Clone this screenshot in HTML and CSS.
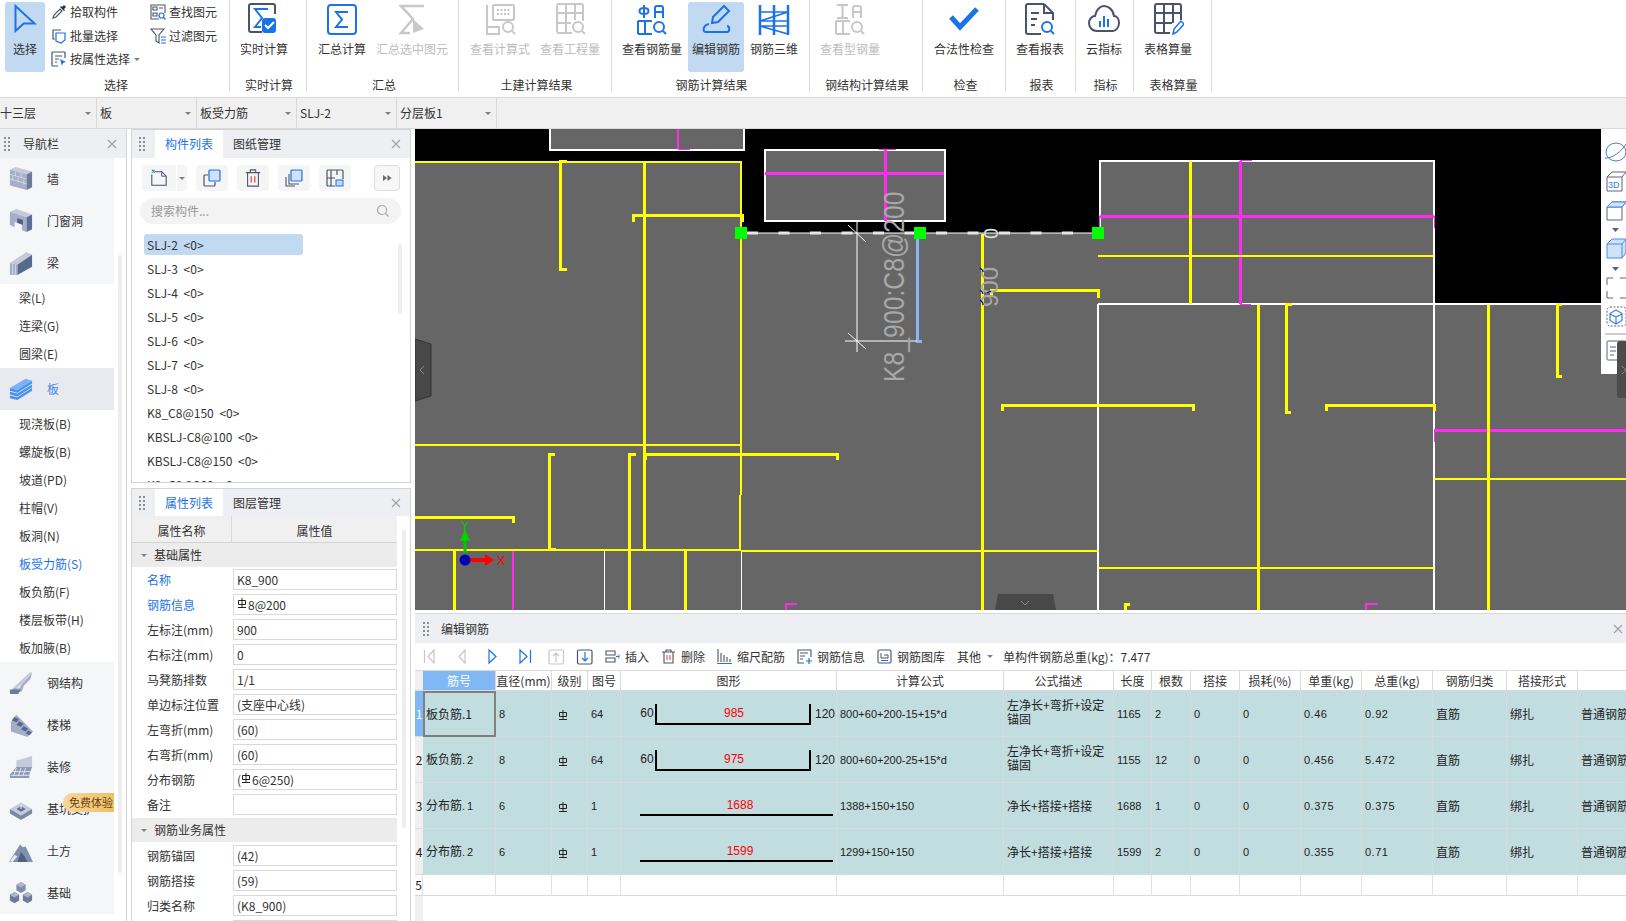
FILE: index.html
```html
<!DOCTYPE html>
<html lang="zh-CN">
<head>
<meta charset="utf-8">
<title>编辑钢筋</title>
<link rel="stylesheet" href="styles.css">
</head>
<body>
<svg class="defs" width="0" height="0">
  <symbol id="grip" viewBox="0 0 6 14"><path d="M0 0h2v2H0zM4 0h2v2H4zM0 4h2v2H0zM4 4h2v2H4zM0 8h2v2H0zM4 8h2v2H4zM0 12h2v2H0zM4 12h2v2H4z" fill="#8c8c8c"/></symbol>
  <symbol id="close" viewBox="0 0 10 10"><path d="M1 1l8 8M9 1l-8 8" stroke="#a3a3a3" stroke-width="1.2" fill="none"/></symbol>
  <symbol id="bar" viewBox="0 0 10 10"><path d="M1.5 2.5h7v4h-7zM5 0v9M1 9.5h8" stroke="#222" stroke-width="1" fill="none"/></symbol>
</svg>

<header class="ribbon">
  <section class="group g-select">
    <div class="body">
      <div class="big active sel"><svg class="ic" viewBox="0 0 32 32"><path d="M6.5 3V28L14.7 20.5H25.5Z" fill="none" stroke="#1a73e8" stroke-width="2"/></svg><span>选择</span></div>
      <div class="smalls">
        <div class="sm"><svg class="sic" viewBox="0 0 16 16"><path d="M2 14l1-3 6-6 2 2-6 6z" fill="none" stroke="#4a5468" stroke-width="1.2"/><path d="M9 3l1-1 1 1 2-2 2 2-2 2 1 1-1 1-4-4z" fill="#2b3242"/></svg><span>拾取构件</span></div>
        <div class="sm"><svg class="sic" viewBox="0 0 16 16"><path d="M10 2H2v9h2" fill="none" stroke="#4a5468" stroke-width="1.2"/><path d="M5 5h9v7l-4 3-5-2z" fill="none" stroke="#1a73e8" stroke-width="1.2"/></svg><span>批量选择</span></div>
        <div class="sm"><svg class="sic" viewBox="0 0 16 16"><path d="M14 7V2a1 1 0 0 0-1-1H2a1 1 0 0 0-1 1v12a1 1 0 0 0 1 1h5M4 5h7M4 8h4M4 11h2" fill="none" stroke="#4a5468" stroke-width="1.2"/><path d="M9 8l6 3-3 1-1 3z" fill="#1a73e8"/></svg><span>按属性选择</span><i class="caret"></i></div>
      </div>
      <div class="smalls col2">
        <div class="sm"><svg class="sic" viewBox="0 0 16 16"><path d="M15 9V1H1v14h8M3 3h4v3H3zM9 4h4M3 9h4v3H3z" fill="none" stroke="#4a5468" stroke-width="1.1"/><circle cx="11.5" cy="11.5" r="2.5" fill="none" stroke="#1a73e8" stroke-width="1.2"/><path d="M13.5 13.5L15.5 15.5" stroke="#1a73e8" stroke-width="1.2"/></svg><span>查找图元</span></div>
        <div class="sm"><svg class="sic" viewBox="0 0 16 16"><path d="M1 1h13L9 7v8L6 13V7z" fill="none" stroke="#4a5468" stroke-width="1.1"/><path d="M11 9h5M11 12h5M11 15h5" stroke="#1a73e8" stroke-width="1.2"/></svg><span>过滤图元</span></div>
      </div>
    </div>
    <div class="glabel">选择</div>
  </section>

  <section class="group g-real">
    <div class="body">
      <div class="big"><svg class="ic" viewBox="0 0 32 32"><path d="M12 1H3a2 2 0 0 0-2 2v24a2 2 0 0 0 2 2h11M12 1h13a2 2 0 0 1 2 2v8" fill="none" stroke="#4a5468" stroke-width="2"/><path d="M20 6H7l7 9-7 9h6" fill="none" stroke="#1a73e8" stroke-width="2"/><rect x="14" y="15" width="14" height="15" rx="3" fill="#1a73e8"/><path d="M17 22l3 3 6-6" fill="none" stroke="#fff" stroke-width="2"/></svg><span>实时计算</span></div>
    </div>
    <div class="glabel">实时计算</div>
  </section>

  <section class="group g-sum">
    <div class="body">
      <div class="big"><svg class="ic" viewBox="0 0 32 32"><rect x="2" y="2" width="28" height="29" rx="3" fill="none" stroke="#1a73e8" stroke-width="2"/><path d="M22 9H10l6 7.5-6 7.5h12" fill="none" stroke="#1a73e8" stroke-width="2"/></svg><span>汇总计算</span></div>
      <div class="big off tight"><svg class="ic" viewBox="0 0 32 32"><path d="M28 3H5l12 13L5 30h9" fill="none" stroke="#c8c8c8" stroke-width="2.5"/><path d="M17 16l11 10-11 4z" fill="#c8c8c8"/></svg><span>汇总选中图元</span></div>
    </div>
    <div class="glabel">汇总</div>
  </section>

  <section class="group g-civil">
    <div class="body">
      <div class="big off"><svg class="ic" viewBox="0 0 32 32"><g fill="none" stroke="#c8c8c8" stroke-width="2"><path d="M3 2V31H15V24H3"/><rect x="9" y="2" width="21" height="15" rx="1"/><path d="M13 7h13M13 11h13" stroke-dasharray="2 1.5"/><circle cx="24" cy="24" r="5"/><path d="M28 28l3 3"/></g></svg><span>查看计算式</span></div>
      <div class="big off tight"><svg class="ic" viewBox="0 0 32 32"><g fill="none" stroke="#c8c8c8" stroke-width="2"><path d="M18 30H5a2 2 0 0 1-2-2V3a2 2 0 0 1 2-2h22a2 2 0 0 1 2 2v15M3 10h26M3 20h14M12 1v29M21 1v16"/><circle cx="24" cy="24" r="5"/><path d="M28 28l3 3"/></g></svg><span>查看工程量</span></div>
    </div>
    <div class="glabel">土建计算结果</div>
  </section>

  <section class="group g-rebar">
    <div class="body">
      <div class="big"><svg class="ic" viewBox="0 0 32 32"><g fill="none" stroke="#1a73e8" stroke-width="2"><path d="M8 2V15M8 5c6 0 6 6 0 6S2 5 8 5z"/><path d="M19 15V5a2 2 0 0 1 2-2h4a2 2 0 0 1 2 2v10M19 9h8"/><path d="M2 18H16M9 18V31M2 31H16M2 18V31"/><circle cx="23" cy="24" r="5"/><path d="M27 28l3 3"/></g></svg><span>查看钢筋量</span></div>
      <div class="big active edit"><svg class="ic" viewBox="0 0 32 32"><g fill="none" stroke="#1a73e8" stroke-width="2"><path d="M12 20l1-6L24 3l5 5L18 19z"/><path d="M9 21C3 22 2 29 6 29H27c3 0 3-6 0-6"/></g></svg><span>编辑钢筋</span></div>
      <div class="big"><svg class="ic" viewBox="0 0 32 32"><g fill="none" stroke="#1a73e8"><path d="M2 2V32M30 2V32M16 2V32" stroke-width="2.5"/><path d="M2 9H30M2 18H30M2 23H30M2 18L30 9M2 23L30 31" stroke-width="1.6"/></g></svg><span>钢筋三维</span></div>
    </div>
    <div class="glabel">钢筋计算结果</div>
  </section>

  <section class="group g-steel">
    <div class="body">
      <div class="big off"><svg class="ic" viewBox="0 0 32 32"><g fill="none" stroke="#c8c8c8" stroke-width="2"><path d="M3 2H14M8.5 2V15M3 15H14"/><path d="M19 15V5a2 2 0 0 1 2-2h4a2 2 0 0 1 2 2v10M19 9h8"/><path d="M2 18H16M9 18V31M2 31H16M2 18V31"/><circle cx="23" cy="24" r="5"/><path d="M27 28l3 3"/></g></svg><span>查看型钢量</span></div>
    </div>
    <div class="glabel">钢结构计算结果</div>
  </section>

  <section class="group g-check">
    <div class="body">
      <div class="big"><svg class="ic" viewBox="0 0 32 32"><path d="M3 14l9 10L29 6" fill="none" stroke="#1a73e8" stroke-width="5"/></svg><span>合法性检查</span></div>
    </div>
    <div class="glabel">检查</div>
  </section>

  <section class="group g-report">
    <div class="body">
      <div class="big"><svg class="ic" viewBox="0 0 32 32"><g fill="none" stroke="#4a5468" stroke-width="2"><path d="M20 1H4a2 2 0 0 0-2 2v26a2 2 0 0 0 2 2h13M20 1l9 9v7M20 1v9h9M7 10h8M7 16h6M7 22h4"/></g><circle cx="23" cy="24" r="5" fill="none" stroke="#1a73e8" stroke-width="2"/><path d="M27 28l3 3" stroke="#1a73e8" stroke-width="2"/></svg><span>查看报表</span></div>
    </div>
    <div class="glabel">报表</div>
  </section>

  <section class="group g-index">
    <div class="body">
      <div class="big"><svg class="ic" viewBox="0 0 32 32"><path d="M9 28C3 28 1 23 1 20c0-4 3-7 6-7C8 7 12 3 16 3s9 3 10 10c3 0 5 3 5 7s-3 8-6 8z" fill="none" stroke="#4a5468" stroke-width="2"/><path d="M12 18v6M16 13v11M20 16v8" stroke="#1a73e8" stroke-width="2"/></svg><span>云指标</span></div>
    </div>
    <div class="glabel">指标</div>
  </section>

  <section class="group g-table">
    <div class="body">
      <div class="big"><svg class="ic" viewBox="0 0 32 32"><path d="M18 30H5a2 2 0 0 1-2-2V3a2 2 0 0 1 2-2h22a2 2 0 0 1 2 2v14M3 10h26M3 20h17M12 1v29M21 1v19" fill="none" stroke="#4a5468" stroke-width="2"/><path d="M21 31l1-5 7-8 3 3-7 8z" fill="#fff" stroke="#1a73e8" stroke-width="1.5"/></svg><span>表格算量</span></div>
    </div>
    <div class="glabel">表格算量</div>
  </section>
</header>

<div class="selbar">
  <div class="cell first"><span>十三层</span><i class="caret"></i></div>
  <div class="cell"><span>板</span><i class="caret"></i></div>
  <div class="cell"><span>板受力筋</span><i class="caret"></i></div>
  <div class="cell"><span>SLJ-2</span><i class="caret"></i></div>
  <div class="cell"><span>分层板1</span><i class="caret"></i></div>
</div>

<main class="main">
  <nav class="nav">
    <div class="phead">
      <svg class="grip"><use href="#grip"/></svg>
      <span class="ptitle navtitle">导航栏</span>
      <svg class="x"><use href="#close"/></svg>
    </div>
    <div class="navbody">
      <div class="navlist">
        <div class="nbig"><svg class="nic" viewBox="0 0 26 26"><path d="M1 3l6-3 18 5-6 3z" fill="#c4cadb"/><path d="M1 3l18 5v17L1 20z" fill="#a6aec6"/><path d="M19 8l6-3v17l-6 3z" fill="#6d7a9c"/><path d="M1 8l18 5M1 13l18 5M7 5v5M13 7v5M4 10v5M10 12v5M16 14v5" stroke="#d3d8e6" fill="none"/></svg><span>墙</span></div>
        <div class="nbig"><svg class="nic" viewBox="0 0 26 26"><path d="M1 3l7-3 17 6-6 3z" fill="#c4cadb"/><path d="M1 3l18 6v16l-5-2v-6l-8-3v6L1 17z" fill="#a6aec6"/><path d="M19 9l6-3v16l-6 3z" fill="#5f6e92"/><path d="M9 10l6 2v5l-6-2z" fill="#4e5d80"/></svg><span>门窗洞</span></div>
        <div class="nbig"><svg class="nic" viewBox="0 0 26 26"><path d="M1 13L19 1l6 3L9 15z" fill="#c4cadb"/><path d="M9 15L25 4v13L9 26z" fill="#58688f"/><path d="M1 13l8 2v11H1z" fill="#a6aec6"/><path d="M4 14v12M7 15v11" stroke="#d3d8e6"/></svg><span>梁</span></div>
        <div class="nsub">梁(L)</div>
        <div class="nsub">连梁(G)</div>
        <div class="nsub">圆梁(E)</div>
        <div class="nbig cur"><svg class="nic" viewBox="0 0 26 26"><path d="M1 12L18 2l7 2L9 14z" fill="#79b2f7"/><path d="M1 12l8 2v3l-8-2zM9 14L25 4v3L9 17zM1 16l8 2v3l-8-2zM9 18l16-10v3L9 21zM1 20l8 2v3l-8-2zM9 22l16-10v3L9 25z" fill="#4a90ee"/></svg><span>板</span></div>
        <div class="nsub">现浇板(B)</div>
        <div class="nsub">螺旋板(B)</div>
        <div class="nsub">坡道(PD)</div>
        <div class="nsub">柱帽(V)</div>
        <div class="nsub">板洞(N)</div>
        <div class="nsub on">板受力筋(S)</div>
        <div class="nsub">板负筋(F)</div>
        <div class="nsub">楼层板带(H)</div>
        <div class="nsub">板加腋(B)</div>
        <div class="nbig"><svg class="nic" viewBox="0 0 26 26"><path d="M1 24l4-6 6 1 3-5 11-12-2 7-7 7-2 6z" fill="#a6aec6"/><path d="M5 18L23 1l2 1L9 19z" fill="#c4cadb"/><path d="M1 20h12l-3 5H1z" fill="#6d7a9c"/></svg><span>钢结构</span></div>
        <div class="nbig"><svg class="nic" viewBox="0 0 26 26"><path d="M2 10l6-8 18 18-6 6L2 20z" fill="#a6aec6"/><path d="M6 4l5 3-3 3-5-2zM11 9l5 3-3 3-5-2zM16 14l5 3-3 3-5-2zM21 19l4 2-3 3-4-2z" fill="#58688f"/></svg><span>楼梯</span></div>
        <div class="nbig"><svg class="nic" viewBox="0 0 26 26"><path d="M8 6L25 1v12L8 17z" fill="#c4cadb"/><path d="M1 21l7-8h17l-3 8v4H1z" fill="#8d98b6"/><path d="M4 18h19M2 22h20M8 14l-3 9M13 14l-3 9M18 14l-3 9" stroke="#e6e9f1" fill="none"/></svg><span>装修</span></div>
        <div class="nbig"><svg class="nic" viewBox="0 0 26 26"><path d="M1 13L13 6l12 7-12 7z" fill="#c4cadb"/><path d="M1 13l12 7v5L1 18zM25 13l-12 7v5l12-7z" fill="#7b88a8"/><path d="M8 13l5-3 5 3-5 3z" fill="#5f6e92"/><path d="M13 8v5" stroke="#fff"/></svg><span>基坑支护</span></div>
        <div class="nbig"><svg class="nic" viewBox="0 0 26 26"><path d="M0 25L12 6l3 3 3-1 8 17z" fill="#8290b0"/><path d="M9 25l4-11 4 5 3 6z" fill="#4f5f85"/><path d="M1 24l5-7 3 2-5 6z" fill="#e7eaf1"/></svg><span>土方</span></div>
        <div class="nbig"><svg class="nic" viewBox="0 0 26 26"><path d="M8 4l5-3 5 3v6l-5 3-5-3z" fill="#7e8bab"/><path d="M8 4l5 3 5-3-5-3z" fill="#aeb6cc"/><path d="M1 15l5-3 5 3v6l-5 3-5-3z" fill="#6d7a9c"/><path d="M1 15l5 3 5-3-5-3z" fill="#aeb6cc"/><path d="M15 15l5-3 5 3v6l-5 3-5-3z" fill="#6d7a9c"/><path d="M15 15l5 3 5-3-5-3z" fill="#aeb6cc"/></svg><span>基础</span></div>
        <div class="badge">免费体验</div>
      </div>
      <div class="navtrack"><div class="navthumb"></div></div>
    </div>
  </nav>

  <div class="mid">
    <section class="panel listpanel">
      <div class="phead">
        <svg class="grip"><use href="#grip"/></svg>
        <span class="tab on">构件列表</span><span class="tab">图纸管理</span>
        <svg class="x"><use href="#close"/></svg>
      </div>
      <div class="listtools">
        <div class="tbtn newbtn">
          <svg class="t20" viewBox="0 0 18 20"><path d="M4 3h8l5 5v10H1V6" fill="none" stroke="#4a5468" stroke-width="1.2"/><path d="M12 3v5h5" fill="none" stroke="#4a5468"/><path d="M1 1l3 3M4 1L1 4" stroke="#1a73e8" stroke-width="1.2"/></svg>
          <span class="split"><i class="caret"></i></span>
        </div>
        <div class="tbtn"><svg class="t20" viewBox="0 0 18 18"><path d="M5 6H2a1 1 0 0 0-1 1v9a1 1 0 0 0 1 1h9a1 1 0 0 0 1-1v-3" fill="none" stroke="#4a5468" stroke-width="1.2"/><rect x="6" y="1" width="11" height="11" rx="1" fill="#cfe2fa" stroke="#1a73e8" stroke-width="1.2"/></svg></div>
        <div class="tbtn"><svg class="t20" viewBox="0 0 18 20"><path d="M1 4h16M6 4V1h6v3M3 4v15h12V4" fill="none" stroke="#4a5468" stroke-width="1.2"/><path d="M7 8v7M11 8v7" stroke="#e23b3b" stroke-width="1.3"/></svg></div>
        <div class="tbtn"><svg class="t20" viewBox="0 0 18 18"><rect x="6" y="1" width="11" height="11" rx="1" fill="#cfe2fa" stroke="#1a73e8" stroke-width="1.2"/><path d="M4 5v10h10M1 8v9h9" fill="none" stroke="#4a5468" stroke-width="1.1"/></svg></div>
        <div class="tbtn"><svg class="t20" viewBox="0 0 18 18"><path d="M9 17H2a1 1 0 0 1-1-1V2a1 1 0 0 1 1-1h14a1 1 0 0 1 1 1v8M1 9h8M5 1v8M5 9v8M11 1v5" fill="none" stroke="#4a5468" stroke-width="1.2"/><rect x="10" y="11" width="7" height="6" fill="#bcd7f8" stroke="#1a73e8"/></svg></div>
        <div class="tbtn more"><svg class="t10" viewBox="0 0 10 10"><path d="M1 2l4 3-4 3zM5.5 2l4 3-4 3z" fill="#666"/></svg></div>
      </div>
      <div class="search"><span>搜索构件...</span><svg class="t14" viewBox="0 0 14 14"><circle cx="6" cy="6" r="4.5" fill="none" stroke="#a8a8a8" stroke-width="1.2"/><path d="M9.5 9.5l3 3" stroke="#a8a8a8" stroke-width="1.2"/></svg></div>
      <div class="clist">
        <div class="li sel"><span>SLJ-2 &lt;0&gt;</span></div>
        <div class="li"><span>SLJ-3 &lt;0&gt;</span></div>
        <div class="li"><span>SLJ-4 &lt;0&gt;</span></div>
        <div class="li"><span>SLJ-5 &lt;0&gt;</span></div>
        <div class="li"><span>SLJ-6 &lt;0&gt;</span></div>
        <div class="li"><span>SLJ-7 &lt;0&gt;</span></div>
        <div class="li"><span>SLJ-8 &lt;0&gt;</span></div>
        <div class="li"><span>K8_C8@150 &lt;0&gt;</span></div>
        <div class="li"><span>KBSLJ-C8@100 &lt;0&gt;</span></div>
        <div class="li"><span>KBSLJ-C8@150 &lt;0&gt;</span></div>
        <div class="li"><span>K8_C8@200 &lt;0&gt;</span></div>
        <div class="listthumb"></div>
      </div>
    </section>

    <section class="panel proppanel">
      <div class="phead">
        <svg class="grip"><use href="#grip"/></svg>
        <span class="tab on">属性列表</span><span class="tab">图层管理</span>
        <svg class="x"><use href="#close"/></svg>
      </div>
      <div class="propwrap">
        <div class="props">
          <div class="phdr"><span class="pk">属性名称</span><span class="pv">属性值</span></div>
          <div class="pgroup"><i class="caret"></i>基础属性</div>
          <div class="prow"><span class="lab blue">名称</span><span class="val">K8_900</span></div>
          <div class="prow"><span class="lab blue">钢筋信息</span><span class="val"><svg class="barsym up"><use href="#bar"/></svg>8@200</span></div>
          <div class="prow"><span class="lab">左标注(mm)</span><span class="val">900</span></div>
          <div class="prow"><span class="lab">右标注(mm)</span><span class="val">0</span></div>
          <div class="prow"><span class="lab">马凳筋排数</span><span class="val">1/1</span></div>
          <div class="prow"><span class="lab">单边标注位置</span><span class="val">(支座中心线)</span></div>
          <div class="prow"><span class="lab">左弯折(mm)</span><span class="val">(60)</span></div>
          <div class="prow"><span class="lab">右弯折(mm)</span><span class="val">(60)</span></div>
          <div class="prow"><span class="lab">分布钢筋</span><span class="val">(<svg class="barsym up"><use href="#bar"/></svg>6@250)</span></div>
          <div class="prow"><span class="lab">备注</span><span class="val"></span></div>
          <div class="pgroup second"><i class="caret"></i>钢筋业务属性</div>
          <div class="prow"><span class="lab">钢筋锚固</span><span class="val">(42)</span></div>
          <div class="prow"><span class="lab">钢筋搭接</span><span class="val">(59)</span></div>
          <div class="prow"><span class="lab">归类名称</span><span class="val">(K8_900)</span></div>
          <div class="prow"><span class="lab"></span><span class="val"></span></div>
        </div>
        <div class="propthumb"></div>
      </div>
    </section>
  </div>

  <div class="work">
    <div class="canvas">
      <svg class="draw" viewBox="415 129 1211 481" width="1211" height="481">
        <g fill="#666" stroke="none">
          <path d="M415 162H741V233H1100V161H1434V304H1626V610H415Z"/>
          <rect x="550" y="129" width="194" height="21"/>
          <rect x="765" y="150" width="180" height="71"/>
        </g>
        <g fill="none" stroke="#fff" stroke-width="1.5" shape-rendering="crispEdges">
          <path d="M550 129V150H744V129"/>
          <rect x="765" y="150" width="180" height="71"/>
          <path d="M1100 233V161H1434V610M1098 304H1620"/>
          <path d="M1098 304V610" stroke-width="2"/>
          <path d="M741 550V610M604 550V610" stroke-width="1"/>
        </g>
        <g fill="none" stroke="#ff2bf0" stroke-width="3" shape-rendering="crispEdges">
          <path d="M678 129V149" stroke-width="2"/>
          <path d="M678 149H690" stroke-width="1"/>
          <path d="M765 173H944"/>
          <path d="M885 150V221"/>
          <path d="M879 149H896M1099 216V233M1434 216V228" stroke-width="1"/>
          <path d="M1100 216H1434"/>
          <path d="M1252 160H1240" stroke-width="1"/>
          <path d="M1240 161V304"/>
          <path d="M1240 304H1251" stroke-width="1"/>
          <path d="M1434 430H1626"/>
          <path d="M1434 430V442" stroke-width="1"/>
          <path d="M524 550H513" stroke-width="1"/>
          <path d="M513 550V610" stroke-width="2"/>
          <path d="M797 604H786V610M1378 604H1366V610" stroke-width="2.5"/>
        </g>
        <g fill="none" stroke="#ff0" stroke-width="3" shape-rendering="crispEdges">
          <path d="M415 162H741V495" stroke-width="2"/>
          <path d="M567 161H560V269H567"/>
          <path d="M644 162V549"/>
          <path d="M633 222V215H742V222"/>
          <path d="M645 460V454H837V460"/>
          <path d="M555 454H549V549H556"/>
          <path d="M636 454H629V610"/>
          <path d="M740 495V550H415" stroke-width="2"/>
          <path d="M415 517H513V523"/>
          <path d="M454 550V610M685 550V610"/>
          <path d="M982 234V610"/>
          <path d="M991 297V290H1098V298"/>
          <path d="M1002 411V405H1193V411"/>
          <path d="M1190 161V304"/>
          <path d="M1258 305V610"/>
          <path d="M1292 304H1286V412H1291"/>
          <path d="M1326 411V405H1434V411"/>
          <path d="M1488 305V610"/>
          <path d="M1562 304H1557V376H1562"/>
          <path d="M1130 604H1125V610"/>
          <path d="M415 445H741M741 551H1098M1098 256H1434M1098 568H1434M1434 479H1626" stroke-width="2.5"/>
        </g>
        <path d="M917 234V341H922" fill="none" stroke="#8ab4f8" stroke-width="3" shape-rendering="crispEdges"/>
        <g fill="none" stroke="#fff">
          <path d="M857 221V352M845 341H917M741 233H1098"/>
          <path d="M848 225L866 242M848 333L866 349"/>
          <path d="M747 233H1098" stroke="#e6e6e6" stroke-width="3" stroke-dasharray="11 20.5"/>
        </g>
        <g fill="#0f0">
          <rect x="735" y="227" width="12" height="12"/>
          <rect x="914" y="227" width="12" height="12"/>
          <rect x="1092" y="227" width="12" height="12"/>
        </g>
        <text class="dim big-dim" transform="translate(904 382) rotate(-90) scale(1 1.17)">K8_900:C8@200</text>
        <text class="dim small-dim" transform="translate(998 307) rotate(-90)">900</text>
        <text class="dim zero" transform="translate(998 239) rotate(-90)">0</text>
        <path d="M980 268q3 2 3 4M980 290q3 2 3 4M980 300q3 2 3 5M991 291l-4 2" fill="none" stroke="#0000d0" stroke-width="1.2"/>
        <path d="M465 553V537" stroke="#00c800" stroke-width="3"/>
        <path d="M465 529l5 12h-10z" fill="#00d000"/>
        <path d="M470 560H486" stroke="#f00" stroke-width="4"/>
        <path d="M494 560l-9-6v12z" fill="#f00"/>
        <circle cx="465" cy="560" r="5.5" fill="#0000b0"/>
        <text class="axis axy" x="465" y="530" text-anchor="middle">Y</text>
        <text class="axis axx" x="501" y="565" text-anchor="middle">X</text>
        <path d="M415 339l16 5V396l-16 5Z" fill="#484848" stroke="#333"/>
        <path d="M424 366l-4 4 4 4" fill="none" stroke="#888"/>
        <path d="M998 594H1053L1056 610H995Z" fill="#484848"/>
        <path d="M1021 601l4 4 4-4" fill="none" stroke="#888"/>
      </svg>
      <svg class="toolbox" viewBox="0 0 26 269" width="26" height="269">
        <path d="M26 0H1V245H26Z" fill="#fff"/>
        <g fill="none" stroke="#5a6478" stroke-width="1">
          <ellipse cx="16" cy="23" rx="10" ry="9" stroke="#4a7ec0"/>
          <path d="M5 29C12 30 22 22 26 15" stroke="#4a7ec0"/>
          <path d="M7 48l5-5h14M7 48h15v14H7zM22 48l4-5"/>
          <path d="M7 78l5-5h14M7 78h15v13H7zM22 78l4-5"/>
          <path d="M7 78l5-5h14l-4 5z" fill="#cfe2fa" stroke="#4a8be8"/>
          <path d="M7 115l5-5h14v14l-4 5H7z" fill="#cfe2fa" stroke="#4a8be8"/>
          <path d="M7 115h15v14M22 115l4-5" stroke="#4a8be8"/>
          <path d="M7 156v-7h6M26 149h-6M7 162v7h6M26 169h-6"/>
          <rect x="7" y="178" width="19" height="19" rx="3" stroke-dasharray="2 1.5"/>
          <path d="M16 181l6 3.5v7L16 195l-6-3.5v-7zM10 185l6 3 6-3M16 188v7" stroke="#3b82e8" stroke-width="1.2"/>
          <path d="M5 205H26" stroke="#999"/>
          <rect x="7" y="212" width="19" height="19" rx="1"/>
          <path d="M10 218h6M10 222h6M10 226h4"/>
        </g>
        <text class="td" x="8" y="59">3D</text>
        <g fill="#5a6478"><path d="M12 99h7l-3.5 4zM12 138h7l-3.5 4z"/></g>
        <path d="M26 212H20a3 3 0 0 0-3 3V266a3 3 0 0 0 3 3H26Z" fill="#4c4c4c"/>
        <path d="M22 237l4 4-4 4" fill="none" stroke="#888"/>
      </svg>
    </div>

    <section class="rebar">
      <div class="phead">
        <svg class="grip"><use href="#grip"/></svg>
        <span class="ptitle">编辑钢筋</span>
        <svg class="x"><use href="#close"/></svg>
      </div>
      <div class="rtools">
        <svg class="rnav" viewBox="416 643 179 27" width="179" height="27">
          <g fill="none" stroke-width="1.2">
            <path d="M424.5 650V663M434 650l-6 6.5 6 6.5z" stroke="#c6c6c6"/>
            <path d="M465 650l-6 6.5 6 6.5z" stroke="#c6c6c6"/>
            <path d="M489 650l7 6.5-7 6.5z" stroke="#1a73e8"/>
            <path d="M520 650l7 6.5-7 6.5zM530.5 650V663" stroke="#1a73e8"/>
            <rect x="549" y="650" width="14.5" height="14" rx="1.5" stroke="#c6c6c6"/>
            <path d="M556 662v-9M553 656l3-3 3 3" stroke="#c6c6c6"/>
            <rect x="577.5" y="650" width="14.5" height="14" rx="1.5" stroke="#4a5468"/>
            <path d="M585 652v9M582 658l3 3 3-3" stroke="#1a73e8"/>
          </g>
        </svg>
        <div class="ritem"><svg class="t15" viewBox="0 0 15 15"><path d="M1 2h9v4H1zM1 9h9v4H1z" fill="none" stroke="#4a5468" stroke-width="1.1"/><path d="M11 7.5h3M13 5.5l2 2-2 2" fill="none" stroke="#1a73e8"/></svg><span>插入</span></div>
        <div class="ritem"><svg class="t15" viewBox="0 0 15 15"><path d="M1 3h13M5 3V1h5v2M3 3v11h9V3" fill="none" stroke="#4a5468" stroke-width="1.1"/><path d="M6 6v5M9 6v5" stroke="#e23b3b"/></svg><span>删除</span></div>
        <div class="ritem"><svg class="t15" viewBox="0 0 15 15"><path d="M1 0v13M4 4v9M7 6v7M10 8v5M13 10v3" fill="none" stroke="#4a5468" stroke-width="1.1"/><path d="M0 14.5h15" stroke="#1a73e8"/></svg><span>缩尺配筋</span></div>
        <div class="ritem"><svg class="t15" viewBox="0 0 15 15"><path d="M14 8V1H1v13h6M3 4h8M3 7h5M3 10h3" fill="none" stroke="#4a5468" stroke-width="1.1"/><path d="M9 12h6M12 9v6" stroke="#1a73e8" stroke-width="1.2"/></svg><span>钢筋信息</span></div>
        <div class="ritem"><svg class="t15" viewBox="0 0 15 15"><rect x="1" y="1" width="13" height="13" rx="1.5" fill="none" stroke="#4a5468" stroke-width="1.1"/><path d="M4 4v5h7V6H7" fill="none" stroke="#4a5468"/><path d="M4 11.5h7" stroke="#1a73e8"/></svg><span>钢筋图库</span></div>
        <div class="ritem text"><span>其他</span><i class="caret"></i></div>
        <div class="rtotal">单构件钢筋总重(kg)：7.477</div>
      </div>
      <div class="tablewrap">
        <table class="grid">
          <colgroup>
            <col class="c0"><col class="c1"><col class="c2"><col class="c3"><col class="c4"><col class="c5"><col class="c6"><col class="c7"><col class="c8"><col class="c9"><col class="c10"><col class="c11"><col class="c12"><col class="c13"><col class="c14"><col class="c15"><col class="c16">
          </colgroup>
          <thead>
            <tr><th class="gut"></th><th class="hsel">筋号</th><th>直径(mm)</th><th>级别</th><th>图号</th><th>图形</th><th>计算公式</th><th>公式描述</th><th>长度</th><th>根数</th><th>搭接</th><th>损耗(%)</th><th>单重(kg)</th><th>总重(kg)</th><th>钢筋归类</th><th>搭接形式</th><th></th></tr>
          </thead>
          <tbody>
            <tr>
              <td class="gut gsel">1</td><td class="csel">板负筋.1</td><td class="num">8</td><td class="sym"><svg class="barsym"><use href="#bar"/></svg></td><td class="num">64</td>
              <td class="shape"><svg viewBox="0 0 215 45" width="215" height="45"><text class="sn" x="26" y="26" text-anchor="middle">60</text><path d="M35 13V33H189V13" fill="none" stroke="#000" stroke-width="2"/><text class="sr" x="113" y="26" text-anchor="middle">985</text><text class="sn" x="204" y="27" text-anchor="middle">120</text></svg></td>
              <td class="num">800+60+200-15+15*d</td><td class="desc">左净长+弯折+设定锚固</td><td class="num">1165</td><td class="num">2</td><td class="num">0</td><td class="num">0</td><td class="num dec">0.46</td><td class="num dec">0.92</td><td>直筋</td><td>绑扎</td><td>普通钢筋</td>
            </tr>
            <tr>
              <td class="gut">2</td><td>板负筋<span class="num sfx">.2</span></td><td class="num">8</td><td class="sym"><svg class="barsym"><use href="#bar"/></svg></td><td class="num">64</td>
              <td class="shape"><svg viewBox="0 0 215 45" width="215" height="45"><text class="sn" x="26" y="26" text-anchor="middle">60</text><path d="M35 13V33H189V13" fill="none" stroke="#000" stroke-width="2"/><text class="sr" x="113" y="26" text-anchor="middle">975</text><text class="sn" x="204" y="27" text-anchor="middle">120</text></svg></td>
              <td class="num">800+60+200-25+15*d</td><td class="desc">左净长+弯折+设定锚固</td><td class="num">1155</td><td class="num">12</td><td class="num">0</td><td class="num">0</td><td class="num dec">0.456</td><td class="num dec">5.472</td><td>直筋</td><td>绑扎</td><td>普通钢筋</td>
            </tr>
            <tr>
              <td class="gut">3</td><td>分布筋<span class="num sfx">.1</span></td><td class="num">6</td><td class="sym"><svg class="barsym"><use href="#bar"/></svg></td><td class="num">1</td>
              <td class="shape"><svg viewBox="0 0 215 45" width="215" height="45"><path d="M19 32H212" stroke="#000" stroke-width="2"/><text class="sr" x="119" y="26" text-anchor="middle">1688</text></svg></td>
              <td class="num">1388+150+150</td><td>净长+搭接+搭接</td><td class="num">1688</td><td class="num">1</td><td class="num">0</td><td class="num">0</td><td class="num dec">0.375</td><td class="num dec">0.375</td><td>直筋</td><td>绑扎</td><td>普通钢筋</td>
            </tr>
            <tr>
              <td class="gut">4</td><td>分布筋<span class="num sfx">.2</span></td><td class="num">6</td><td class="sym"><svg class="barsym"><use href="#bar"/></svg></td><td class="num">1</td>
              <td class="shape"><svg viewBox="0 0 215 45" width="215" height="45"><path d="M19 32H212" stroke="#000" stroke-width="2"/><text class="sr" x="119" y="26" text-anchor="middle">1599</text></svg></td>
              <td class="num">1299+150+150</td><td>净长+搭接+搭接</td><td class="num">1599</td><td class="num">2</td><td class="num">0</td><td class="num">0</td><td class="num dec">0.355</td><td class="num dec">0.71</td><td>直筋</td><td>绑扎</td><td>普通钢筋</td>
            </tr>
            <tr class="empty">
              <td class="gut">5</td><td></td><td></td><td></td><td></td><td></td><td></td><td></td><td></td><td></td><td></td><td></td><td></td><td></td><td></td><td></td><td></td>
            </tr>
          </tbody>
        </table>
      </div>
    </section>
  </div>
</main>
</body>
</html>
```

FILE: styles.css
```css
* { box-sizing: border-box; }
html, body { margin: 0; padding: 0; }
body {
  width: 1626px; height: 921px; overflow: hidden; background: #fff; color: #333;
  font-family: "Noto Sans CJK SC", "Liberation Sans", sans-serif; font-size: 12px; line-height: 16px;
}
.defs { position: absolute; }
.caret { display: inline-block; width: 0; height: 0; border-left: 3px solid transparent; border-right: 3px solid transparent; border-top: 3px solid #808080; }

/* ribbon */
.ribbon { display: flex; height: 98px; border-bottom: 1px solid #d9d9d9; }
.group { height: 92px; padding-top: 2px; padding-left: 4px; border-right: 1px solid #dcdcdc; flex: none; }
.g-select { width: 230px; padding-left: 5px; }
.g-real { width: 77px; }
.g-sum { width: 152px; padding-left: 5px; }
.g-civil { width: 153px; padding-left: 5px; }
.g-rebar { width: 198px; }
.g-steel { width: 113px; }
.g-check { width: 83px; padding-left: 5px; }
.g-report { width: 70px; }
.g-index { width: 58px; }
.g-table { width: 78px; }
.body { display: flex; height: 70px; }
.big { display: flex; flex-direction: column; align-items: center; padding: 0 6px; height: 70px; border-radius: 3px; flex: none; color: #333; white-space: nowrap; }
.big .ic { width: 32px; height: 32px; margin-top: 1px; margin-bottom: 6px; flex: none; }
.big.active { background: #c2d9f2; }
.big.sel { width: 40px; padding: 0; }
.big.edit { width: 56px; padding: 0; }
.big.off { color: #bdbdbd; }
.big.tight { margin-left: -2px; }
.glabel { margin-top: 5px; height: 16px; text-align: center; padding-left: 2px; margin-left: -4px; white-space: nowrap; }
.smalls { display: flex; flex-direction: column; margin: -1.5px 0 0 6px; width: 99px; flex: none; }
.smalls.col2 { margin-left: 0; width: 70px; }
.sm { display: flex; align-items: center; height: 23.5px; white-space: nowrap; }
.sic { width: 16px; height: 16px; margin-right: 3px; flex: none; }
.sm .caret { margin-left: 4px; }

/* selector bar */
.selbar { display: flex; height: 31px; background: #f0f0f0; border-bottom: 1px solid #d9d9d9; }
.cell { width: 100px; display: flex; align-items: center; justify-content: space-between; padding: 0 5px 0 3px; border-right: 1px solid #d9d9d9; flex: none; }
.cell.first { width: 97px; padding-left: 0; }

/* main columns */
.main { display: flex; height: 792px; overflow: hidden; }
.nav { width: 127px; flex: none; border-right: 1px solid #d4d4d4; display: flex; flex-direction: column; }
.phead { display: flex; align-items: center; height: 29px; background: #eeeff2; flex: none; position: relative; }
.grip { width: 6px; height: 14px; margin-left: 4px; flex: none; }
.x { width: 10px; height: 10px; margin-left: auto; margin-right: 9px; flex: none; }
.ptitle { margin-left: 12px; }
.navtitle { margin-left: 13px; }
.navbody { display: flex; flex: 1; min-height: 0; overflow: hidden; }
.navlist { width: 114px; flex: none; position: relative; }
.nbig { display: flex; align-items: center; height: 42px; background: #f5f6f8; padding-left: 9px; }
.nbig.cur { background: #e8eaf0; color: #4a86e8; }
.nic { width: 24px; height: 24px; margin-right: 14px; flex: none; }
.nsub { height: 28px; line-height: 28px; padding-left: 19px; }
.nsub.on { color: #1a73e8; }
.badge { position: absolute; left: 63px; top: 635px; width: 51px; height: 19px; line-height: 19px; padding-left: 6px; border-radius: 10px 0 0 10px; background: linear-gradient(90deg, #f7d79c, #eebf66); color: #6b430d; font-size: 11px; white-space: nowrap; overflow: hidden; }
.navtrack { width: 12px; padding: 97px 0 0 4px; }
.navthumb { width: 4px; height: 618px; background: #ededed; border-radius: 2px; }

.mid { width: 280px; flex: none; margin: 0 4px; display: flex; flex-direction: column; }
.panel { border: 1px solid #d4d4d4; display: flex; flex-direction: column; overflow: hidden; }
.panel .phead { height: 28px; }
.panel .grip { margin-left: 7px; }
.panel .x { margin-right: 9px; }
.tab { height: 28px; line-height: 28px; padding: 0 10px; width: 68px; text-align: center; }
.tab:nth-of-type(1) { margin-left: 10px; }
.tab.on { background: #fff; color: #1a73e8; }
.listpanel { height: 354px; flex: none; }
.listtools { display: flex; align-items: center; height: 26px; margin: 7px 0 0 10px; flex: none; }
.tbtn { width: 32px; height: 26px; margin-right: 9px; background: #f5f5f5; border-radius: 4px; display: flex; align-items: center; justify-content: center; flex: none; }
.newbtn { width: 45px; justify-content: flex-start; padding-left: 8px; }
.newbtn .split { margin-left: 8px; width: 13px; height: 26px; border-left: 1px solid #fff; display: flex; align-items: center; justify-content: center; }
.tbtn.more { width: 26px; margin-left: 14px; margin-right: 0; border: 1px solid #ddd; background: #f7f7f7; }
.t20 { width: 18px; height: 18px; flex: none; }
.t10 { width: 10px; height: 10px; }
.t14 { width: 14px; height: 14px; }
.t15 { width: 15px; height: 15px; flex: none; }
.search { display: flex; align-items: center; justify-content: space-between; height: 26px; margin: 7px 0 0 8px; width: 261px; padding: 0 11px; border-radius: 13px; background: #f3f3f3; color: #999; flex: none; }
.clist { position: relative; margin: 8px 0 0 12px; flex: 1; overflow: hidden; }
.li { height: 24px; padding-top: 2px; }
.li span { display: block; width: 159px; height: 21px; line-height: 21px; padding-left: 3px; border-radius: 3px; word-spacing: 3px; }
.li.sel span { background: #c2d9f2; }
.listthumb { position: absolute; left: 254px; top: 12px; width: 4px; height: 70px; background: #ededed; border-radius: 2px; }

.proppanel { margin-top: 5px; flex: 1; min-height: 0; border-bottom: 0; }
.proppanel .phead { height: 27px; }
.proppanel .tab { height: 27px; line-height: 27px; }
.propwrap { display: flex; flex: 1; min-height: 0; overflow: hidden; }
.props { width: 265px; flex: none; }
.phdr { display: flex; height: 27px; line-height: 29px; background: #f0f0f0; border-bottom: 1px solid #d4d4d4; text-align: center; overflow: hidden; }
.pk { width: 100px; border-right: 1px solid #d9d9d9; }
.pv { flex: 1; }
.pgroup { display: flex; align-items: center; height: 24px; background: #ececec; padding-left: 9px; }
.pgroup.second { margin: 1px 0; }
.pgroup .caret { margin-right: 7px; }
.prow { display: flex; align-items: center; height: 25px; }
.lab { width: 101px; padding-left: 15px; white-space: nowrap; flex: none; }
.lab.blue { color: #1a73e8; }
.val { width: 164px; height: 21px; line-height: 20px; border: 1px solid #d9d9d9; padding-left: 3px; white-space: nowrap; flex: none; }
.barsym { width: 10px; height: 10px; display: inline-block; vertical-align: -1px; }
.barsym.up { vertical-align: 2px; margin-right: 1px; }
.propthumb { width: 4px; height: 298px; margin: 14px 0 0 5px; background: #ededed; border-radius: 2px; flex: none; }

/* work area */
.work { width: 1211px; flex: none; display: flex; flex-direction: column; }
.canvas { position: relative; height: 481px; background: #000; overflow: hidden; flex: none; }
.draw { display: block; }
.dim { font-family: "Liberation Sans", sans-serif; fill: #a8a8a8; }
.big-dim { font-size: 24.8px; }
.small-dim { font-size: 24px; }
.zero { font-size: 20px; fill: #ddd; }
.axis { font-family: "Liberation Sans", sans-serif; font-size: 13px; }
.axy { fill: #00c800; }
.axx { fill: #f00; }
.toolbox { position: absolute; right: 0; top: 0; }
.td { font-family: "Liberation Sans", sans-serif; font-size: 9px; fill: #3b82e8; }

.rebar { margin-top: 3px; border-top: 1px solid #d9d9d9; flex: 1; min-height: 0; display: flex; flex-direction: column; }
.rebar .phead { height: 29px; }
.rebar .grip { margin-left: 8px; }
.rebar .ptitle { margin-left: 12px; }
.rebar .x { margin-right: 3px; }
.rtools { display: flex; align-items: center; height: 28px; padding-left: 1px; border-bottom: 1px solid #d9d9d9; white-space: nowrap; flex: none; }
.rnav { flex: none; margin-right: -2px; }
.ritem { display: flex; align-items: center; margin-left: 12px; flex: none; }
.ritem svg { margin-right: 5px; }
.ritem .caret { margin-left: 6px; }
.rtotal { margin-left: 10px; }

.tablewrap { flex: 1; overflow: hidden; background: linear-gradient(90deg, #f0f0f0 8px, #fff 8px); }
.grid { table-layout: fixed; border-collapse: separate; border-spacing: 0; width: 1226px; }
.c0 { width: 8px; } .c1 { width: 73px; } .c2 { width: 56px; } .c3 { width: 36px; } .c4 { width: 33px; }
.c5 { width: 216px; } .c6 { width: 167px; } .c7 { width: 110px; } .c8 { width: 38px; } .c9 { width: 39px; }
.c10 { width: 49px; } .c11 { width: 61px; } .c12 { width: 61px; } .c13 { width: 71px; } .c14 { width: 74px; }
.c15 { width: 71px; } .c16 { width: 63px; }
.grid th { height: 20px; padding: 0; font-weight: 400; text-align: center; background: #fff; border-right: 1px solid #d9d9d9; border-bottom: 1px solid #d9d9d9; white-space: nowrap; overflow: hidden; }
.grid td { height: 46px; padding: 0 0 0 3px; background: #c1dde0; border-right: 1px solid #d4dcdc; border-bottom: 1px solid #d4dcdc; white-space: nowrap; overflow: hidden; color: #222; }
.grid th.gut, .grid td.gut { background: #f0f0f0; padding: 0; text-align: center; border-right: 0; }
.grid th.hsel { background: #7fb8f5; color: #fff; }
.grid td.gsel { background: #7fb8f5; color: #fff; }
.grid td.csel { outline: 2px solid #808080; outline-offset: -2px; }
.grid td.num, .grid span.num { font-family: "Liberation Sans", sans-serif; font-size: 11px; }
.grid td.dec { letter-spacing: 0.5px; }
.grid span.sfx { letter-spacing: 2px; }
.grid td.sym { padding-left: 6px; }
.grid td.shape { padding: 0; }
.grid td.shape svg { display: block; }
.grid td.desc { white-space: normal; line-height: 14px; padding-bottom: 4px; }
.grid .empty td { height: 21px; background: #fff; border-bottom: 1px solid #d9d9d9; border-right: 1px solid #e2e2e2; }
.sn { font-family: "Liberation Sans", sans-serif; font-size: 12px; fill: #222; }
.sr { font-family: "Liberation Sans", sans-serif; font-size: 12px; fill: #f00; }
```
